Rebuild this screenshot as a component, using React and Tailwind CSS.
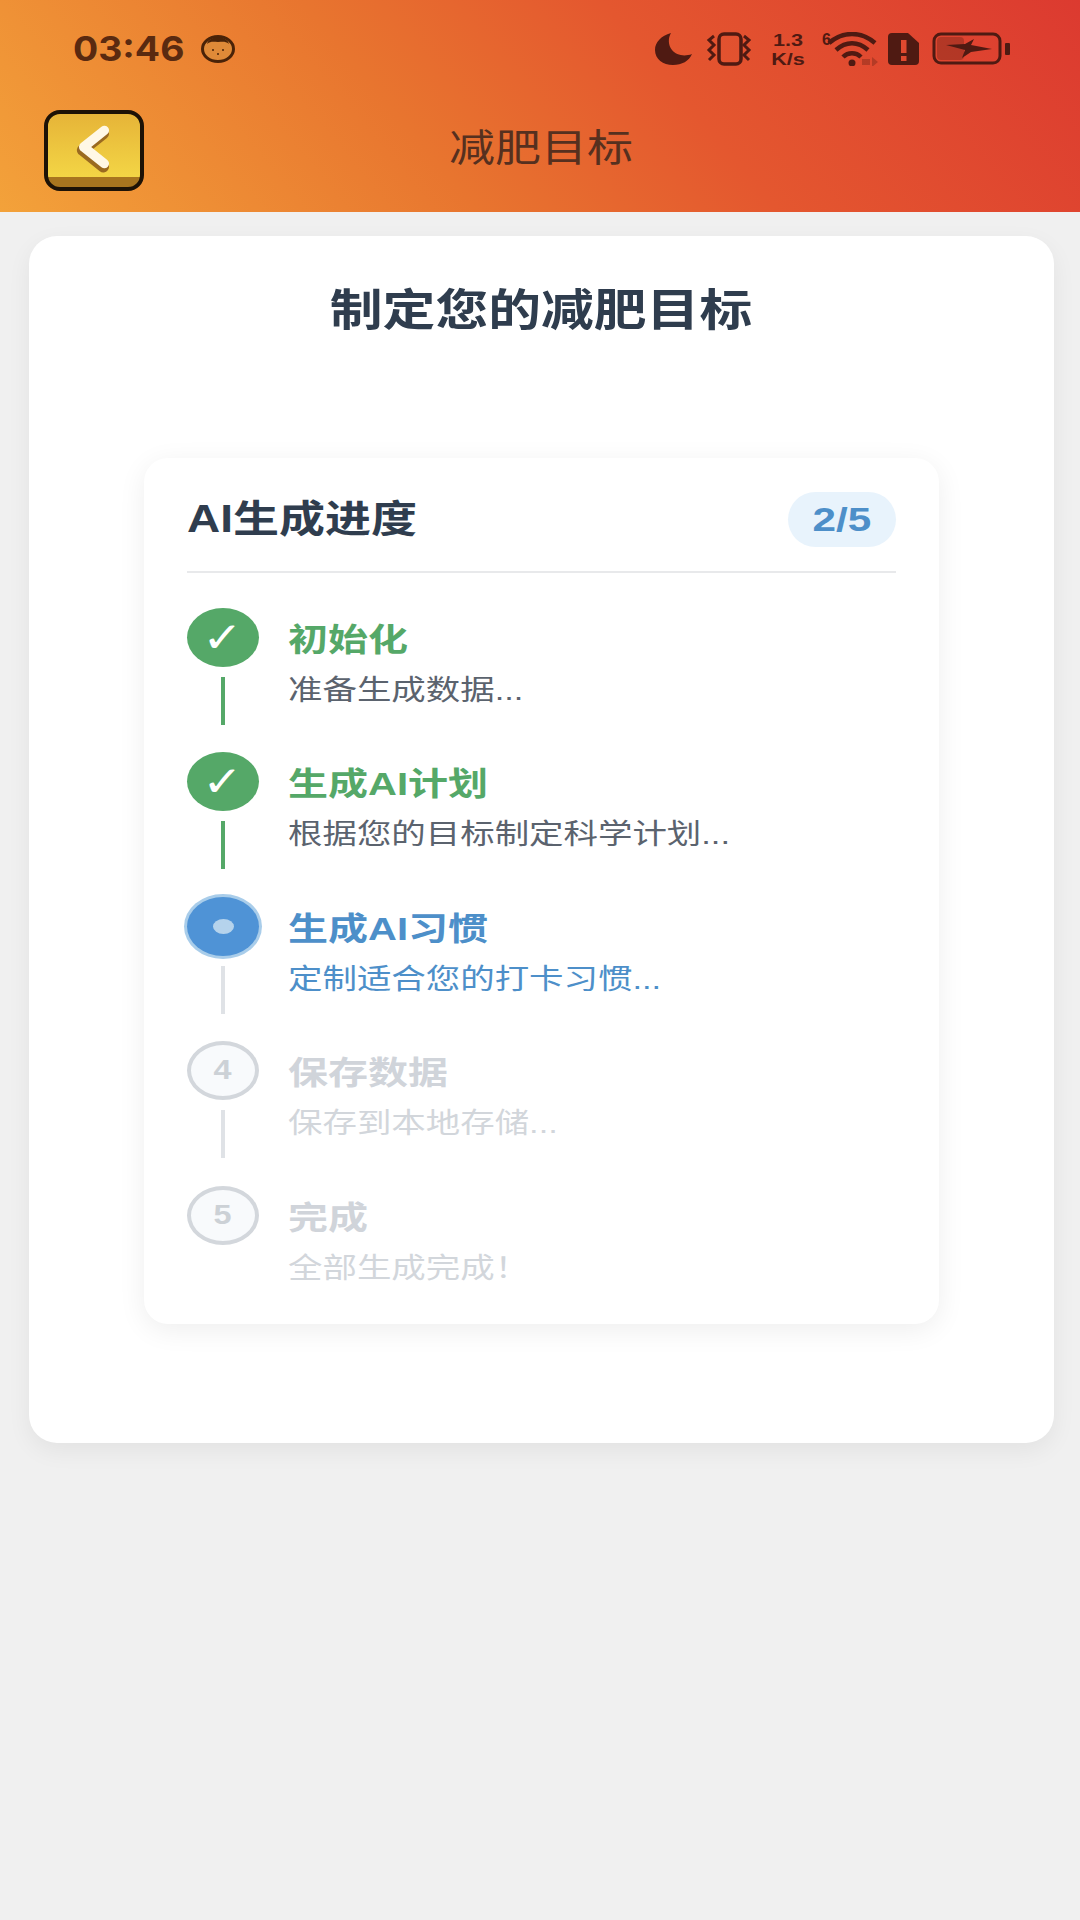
import React from 'react';

const steps = [
  { id: 1, title: '初始化', desc: '准备生成数据...', state: 'done' },
  { id: 2, title: '生成AI计划', desc: '根据您的目标制定科学计划...', state: 'done' },
  { id: 3, title: '生成AI习惯', desc: '定制适合您的打卡习惯...', state: 'active' },
  { id: 4, title: '保存数据', desc: '保存到本地存储...', state: 'todo' },
  { id: 5, title: '完成', desc: '全部生成完成！', state: 'todo' },
];

const StatusIcons = () => (
  <svg width="356" height="34" viewBox="0 0 356 34" className="text-[#4f1a12]" fill="currentColor">
    {/* moon */}
    <path d="M17 1 C7 4 1 10 1 18 C1 27 9 33 19 33 C28 33 35 29 38 22 C30 25 22 23 18 18 C14 13 14 6 17 1 Z" />
    {/* vibrate */}
    <rect x="65" y="2" width="22" height="30" rx="5" fill="none" stroke="currentColor" strokeWidth="3.5" />
    <path d="M60 4 L55 8 L60 13 L55 18 L60 23 L55 28 M90 4 L95 8 L90 13 L95 18 L90 23 L95 28" fill="none" stroke="currentColor" strokeWidth="3" />
    {/* wifi */}
    <path d="M175 11 C189 -1 207 -1 221 11 M182 18 C192 9 204 9 214 18 M189 25 C194 20 202 20 207 25" fill="none" stroke="currentColor" strokeWidth="4.5" />
    <circle cx="198" cy="31" r="3.5" />
    <path d="M208 27 h8 v6 h-8 z M218 25 l6 5 l-6 5 z" opacity="0.3" />
    {/* sim alert */}
    <path d="M234 5 Q234 1 238 1 L254 1 L265 11 L265 29 Q265 33 261 33 L238 33 Q234 33 234 29 Z" />
    <rect x="247" y="8" width="5.5" height="13" fill="#e0492f" />
    <rect x="247" y="24" width="5.5" height="5" fill="#e0492f" />
    {/* battery */}
    <rect x="280" y="2" width="66" height="29" rx="7" fill="none" stroke="currentColor" strokeWidth="3" />
    <rect x="283" y="5" width="27" height="23" rx="4" opacity="0.3" />
    <path d="M292 13 L311 12 L320 7 L317 13 L338 17 L317 20 L308 26 L311 18 Z" />
    <rect x="351" y="11" width="5" height="12" rx="1" />
  </svg>
);

const StatusBar = () => (
  <div className="flex h-[98px] items-center justify-between pl-[73px] pr-[70px]">
    <div className="flex items-center">
      <span className="inline-block w-[114px] origin-left scale-x-[1.1] font-['Inter'] text-[34px] font-bold leading-none text-[#5a2a10]">03:46</span>
      <svg width="34" height="28" viewBox="0 0 34 28" className="ml-[14px]">
        <ellipse cx="17" cy="14" rx="15.5" ry="12.5" fill="#df8a38" stroke="#4a2308" strokeWidth="3" />
        <path d="M6 9 C8 0 26 0 28 9 C24 6 22 7 17 7 C12 7 10 6 6 9 Z" fill="#4a2308" />
        <circle cx="12" cy="15" r="1" fill="#4a2308" />
        <circle cx="22" cy="15" r="1" fill="#4a2308" />
        <circle cx="17" cy="19" r="1" fill="#4a2308" />
      </svg>
    </div>
    <div className="relative">
      <StatusIcons />
      <div className="absolute left-[111px] top-[-1px] w-[46px] text-center font-['Liberation_Sans'] text-[16px] font-bold leading-[19px] text-[#4f1a12]">
        <div className="scale-x-[1.35]">1.3</div>
        <div className="scale-x-[1.35]">K/s</div>
      </div>
      <span className="absolute left-[168px] top-[-4px] font-['Liberation_Sans'] text-[16px] font-bold text-[#4f1a12]">6</span>
    </div>
  </div>
);

const BackButton = () => (
  <button type="button" className="flex h-[81px] w-[100px] items-center justify-center rounded-[16px] border-[4px] border-[#1d1206] bg-[linear-gradient(180deg,#e6b438_0%,#f3d545_86%,#a8751f_86%,#a8751f_100%)] pb-[8px]">
    <svg width="46" height="54" viewBox="0 0 40 52" fill="none">
      <path d="M30 10 L10 26 L30 42" stroke="#9a6a20" strokeWidth="11" strokeLinecap="round" strokeLinejoin="round" transform="translate(-1 3)" />
      <path d="M30 10 L10 26 L30 42" stroke="#fff8e6" strokeWidth="9" strokeLinecap="round" strokeLinejoin="round" />
    </svg>
  </button>
);

const Header = () => (
  <div className="h-[212px] bg-[linear-gradient(50deg,#f3a23a_0%,#e8752f_38%,#e4572f_62%,#dc3a30_100%)]">
    <StatusBar />
    <div className="relative mt-[12px] flex h-[81px] items-center justify-center">
      <div className="absolute left-[44px] top-0">
        <BackButton />
      </div>
      <span className="relative left-[1px] top-[-3px] inline-block scale-x-[1.21] text-[38px] leading-none text-[#56301f]">减肥目标</span>
    </div>
  </div>
);

const circleStyles = {
  done: 'bg-[#55a868] text-white',
  active: 'bg-[#4f93d6] shadow-[0_0_0_3px_#a9cdea]',
  todo: 'border-[4px] border-[#d3d7dc] bg-[#f8fafc] text-[#ccd1d6]',
};

const titleStyles = {
  done: 'text-[#55a868]',
  active: 'text-[#4d8fc9]',
  todo: 'text-[#d0d4da]',
};

const descStyles = {
  done: 'text-[#5b636e]',
  active: 'text-[#4d8fc9]',
  todo: 'text-[#d2d6db]',
};

const Step = ({ step, last }) => (
  <div className="flex h-[144.4px]">
    <div className="flex w-[72px] flex-col items-center">
      <div className={`flex h-[59px] w-[72px] shrink-0 items-center justify-center rounded-[50%] ${circleStyles[step.state]}`}>
        {step.state === 'done' && (
          <span className="inline-block scale-x-[1.15] font-['DejaVu_Sans'] text-[42px] font-bold leading-none text-white">✓</span>
        )}
        {step.state === 'active' && <div className="h-[15px] w-[21px] rounded-[50%] bg-[#b5d3ec]" />}
        {step.state === 'todo' && (
          <span className="inline-block scale-x-[1.2] font-['Liberation_Sans'] text-[27px] font-bold leading-none">{step.id}</span>
        )}
      </div>
      {!last && (
        <div className={`mt-[10px] h-[48px] w-1 ${step.state === 'done' ? 'bg-[#55a868]' : 'bg-[#dfe2e6]'}`} />
      )}
    </div>
    <div className="ml-[29px] flex flex-col whitespace-nowrap pt-[12px]">
      <span className={`inline-block origin-left scale-x-[1.25] text-[32px] font-bold leading-[40px] ${titleStyles[step.state]}`}>{step.title}</span>
      <span className={`mt-[13px] inline-block origin-left scale-x-[1.23] text-[28px] leading-[36px] ${descStyles[step.state]}`}>{step.desc}</span>
    </div>
  </div>
);

export default function App() {
  return (
    <div className="min-h-[1920px] bg-[#f0f0f0] font-['Liberation_Sans','Noto_Sans_CJK_SC',sans-serif]">
      <Header />
      <div className="pl-[29px] pr-[26px] pt-[24px]">
        <div className="h-[1207px] rounded-[28px] bg-white pl-[115px] pr-[115px] pt-[50px] shadow-[0_8px_24px_rgba(0,0,0,0.06)]">
          <div className="text-center">
            <span className="relative left-[-1px] inline-block scale-x-[1.2] text-[44px] font-bold leading-[50px] text-[#2f3d4e]">制定您的减肥目标</span>
          </div>
          <div className="mt-[122px] h-[866px] rounded-[24px] bg-white pl-[43px] pr-[43px] pt-[34px] shadow-[0_6px_28px_rgba(0,0,0,0.07)]">
            <div className="flex h-[81px] items-start justify-between border-b-2 border-[#e8e9eb]">
              <span className="inline-block origin-left scale-x-[1.21] whitespace-nowrap text-[38px] font-bold leading-[54px] text-[#2f3d4e]">AI生成进度</span>
              <span className="flex h-[55px] w-[108px] items-center justify-center rounded-full bg-[#e8f3fc] text-[33px] font-bold text-[#4d8fc9]">
                <span className="inline-block scale-x-[1.28]">2/5</span>
              </span>
            </div>
            <div className="mt-[35px]">
              {steps.map((step, i) => (
                <Step key={step.id} step={step} last={i === steps.length - 1} />
              ))}
            </div>
          </div>
        </div>
      </div>
    </div>
  );
}
